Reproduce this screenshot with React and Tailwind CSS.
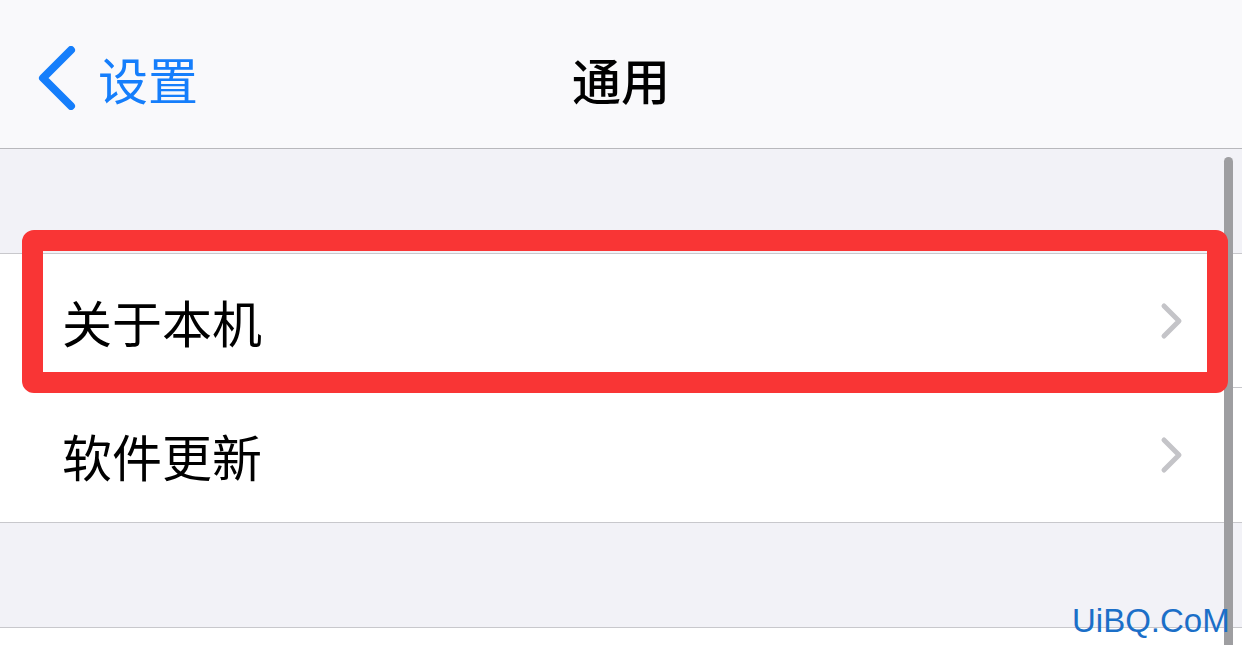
const rows = ["关于本机", "软件更新"];

function Row({ label, last }) {
  return (
    <div className="flex h-[134px] items-center bg-white pl-[62px]">
      <div className={`flex h-full flex-1 items-center pr-[58px] ${last ? "" : "border-b border-[#c8c8cc]"}`}>
        <span className="flex-1 text-[50px] leading-none text-black">{label}</span>
        <svg width="24" height="38" viewBox="0 0 24 38" fill="none" className="text-[#c4c4c8]">
          <path d="M4 4 L19 19 L4 34" stroke="currentColor" strokeWidth="5" strokeLinecap="round" strokeLinejoin="round" />
        </svg>
      </div>
    </div>
  );
}

export default function App() {
  return (
    <div
      className="relative h-[645px] w-[1242px] overflow-hidden bg-white"
      style={{ fontFamily: '"Noto Sans CJK SC", "Noto Sans", sans-serif' }}
    >
      <div className="grid h-[149px] grid-cols-[1fr_auto_1fr] items-center border-b border-[#b8b8bc] bg-[#f9f9fb] pt-[8px]">
        <div className="flex items-center gap-[20px] pl-[34px] text-[#157efb]">
          <svg width="44" height="64" viewBox="0 0 44 64" fill="none">
            <path d="M37 4 L9 32 L37 60" stroke="currentColor" strokeWidth="8" strokeLinecap="round" strokeLinejoin="round" />
          </svg>
          <span className="text-[50px] leading-none">设置</span>
        </div>
        <h1 className="text-[49px] font-medium leading-none text-black">通用</h1>
        <div />
      </div>

      <div className="h-[104px] bg-[#f2f2f7]" />

      <div className="border-y border-[#c8c8cc]">
        {rows.map((r, i) => (
          <Row key={r} label={r} last={i === rows.length - 1} />
        ))}
      </div>

      <div className="h-[105px] border-b border-[#c8c8cc] bg-[#f2f2f7]" />
      <div className="h-[40px] bg-white" />

      {/* scroll indicator */}
      <div className="absolute left-[1224px] top-[157px] h-[520px] w-[9px] rounded-full bg-[#9e9ea1]" />

      {/* highlight box */}
      <div className="absolute left-[22px] top-[230px] h-[163px] w-[1206px] rounded-[12px] border-[21px] border-[#f93535]" />

      {/* watermark */}
      <span
        className="absolute left-[1072px] top-[604px] text-[33px] leading-none text-[#1b6fc8]"
        style={{ fontFamily: '"Liberation Sans", Arial, sans-serif' }}
      >
        UiBQ.CoM
      </span>
    </div>
  );
}
